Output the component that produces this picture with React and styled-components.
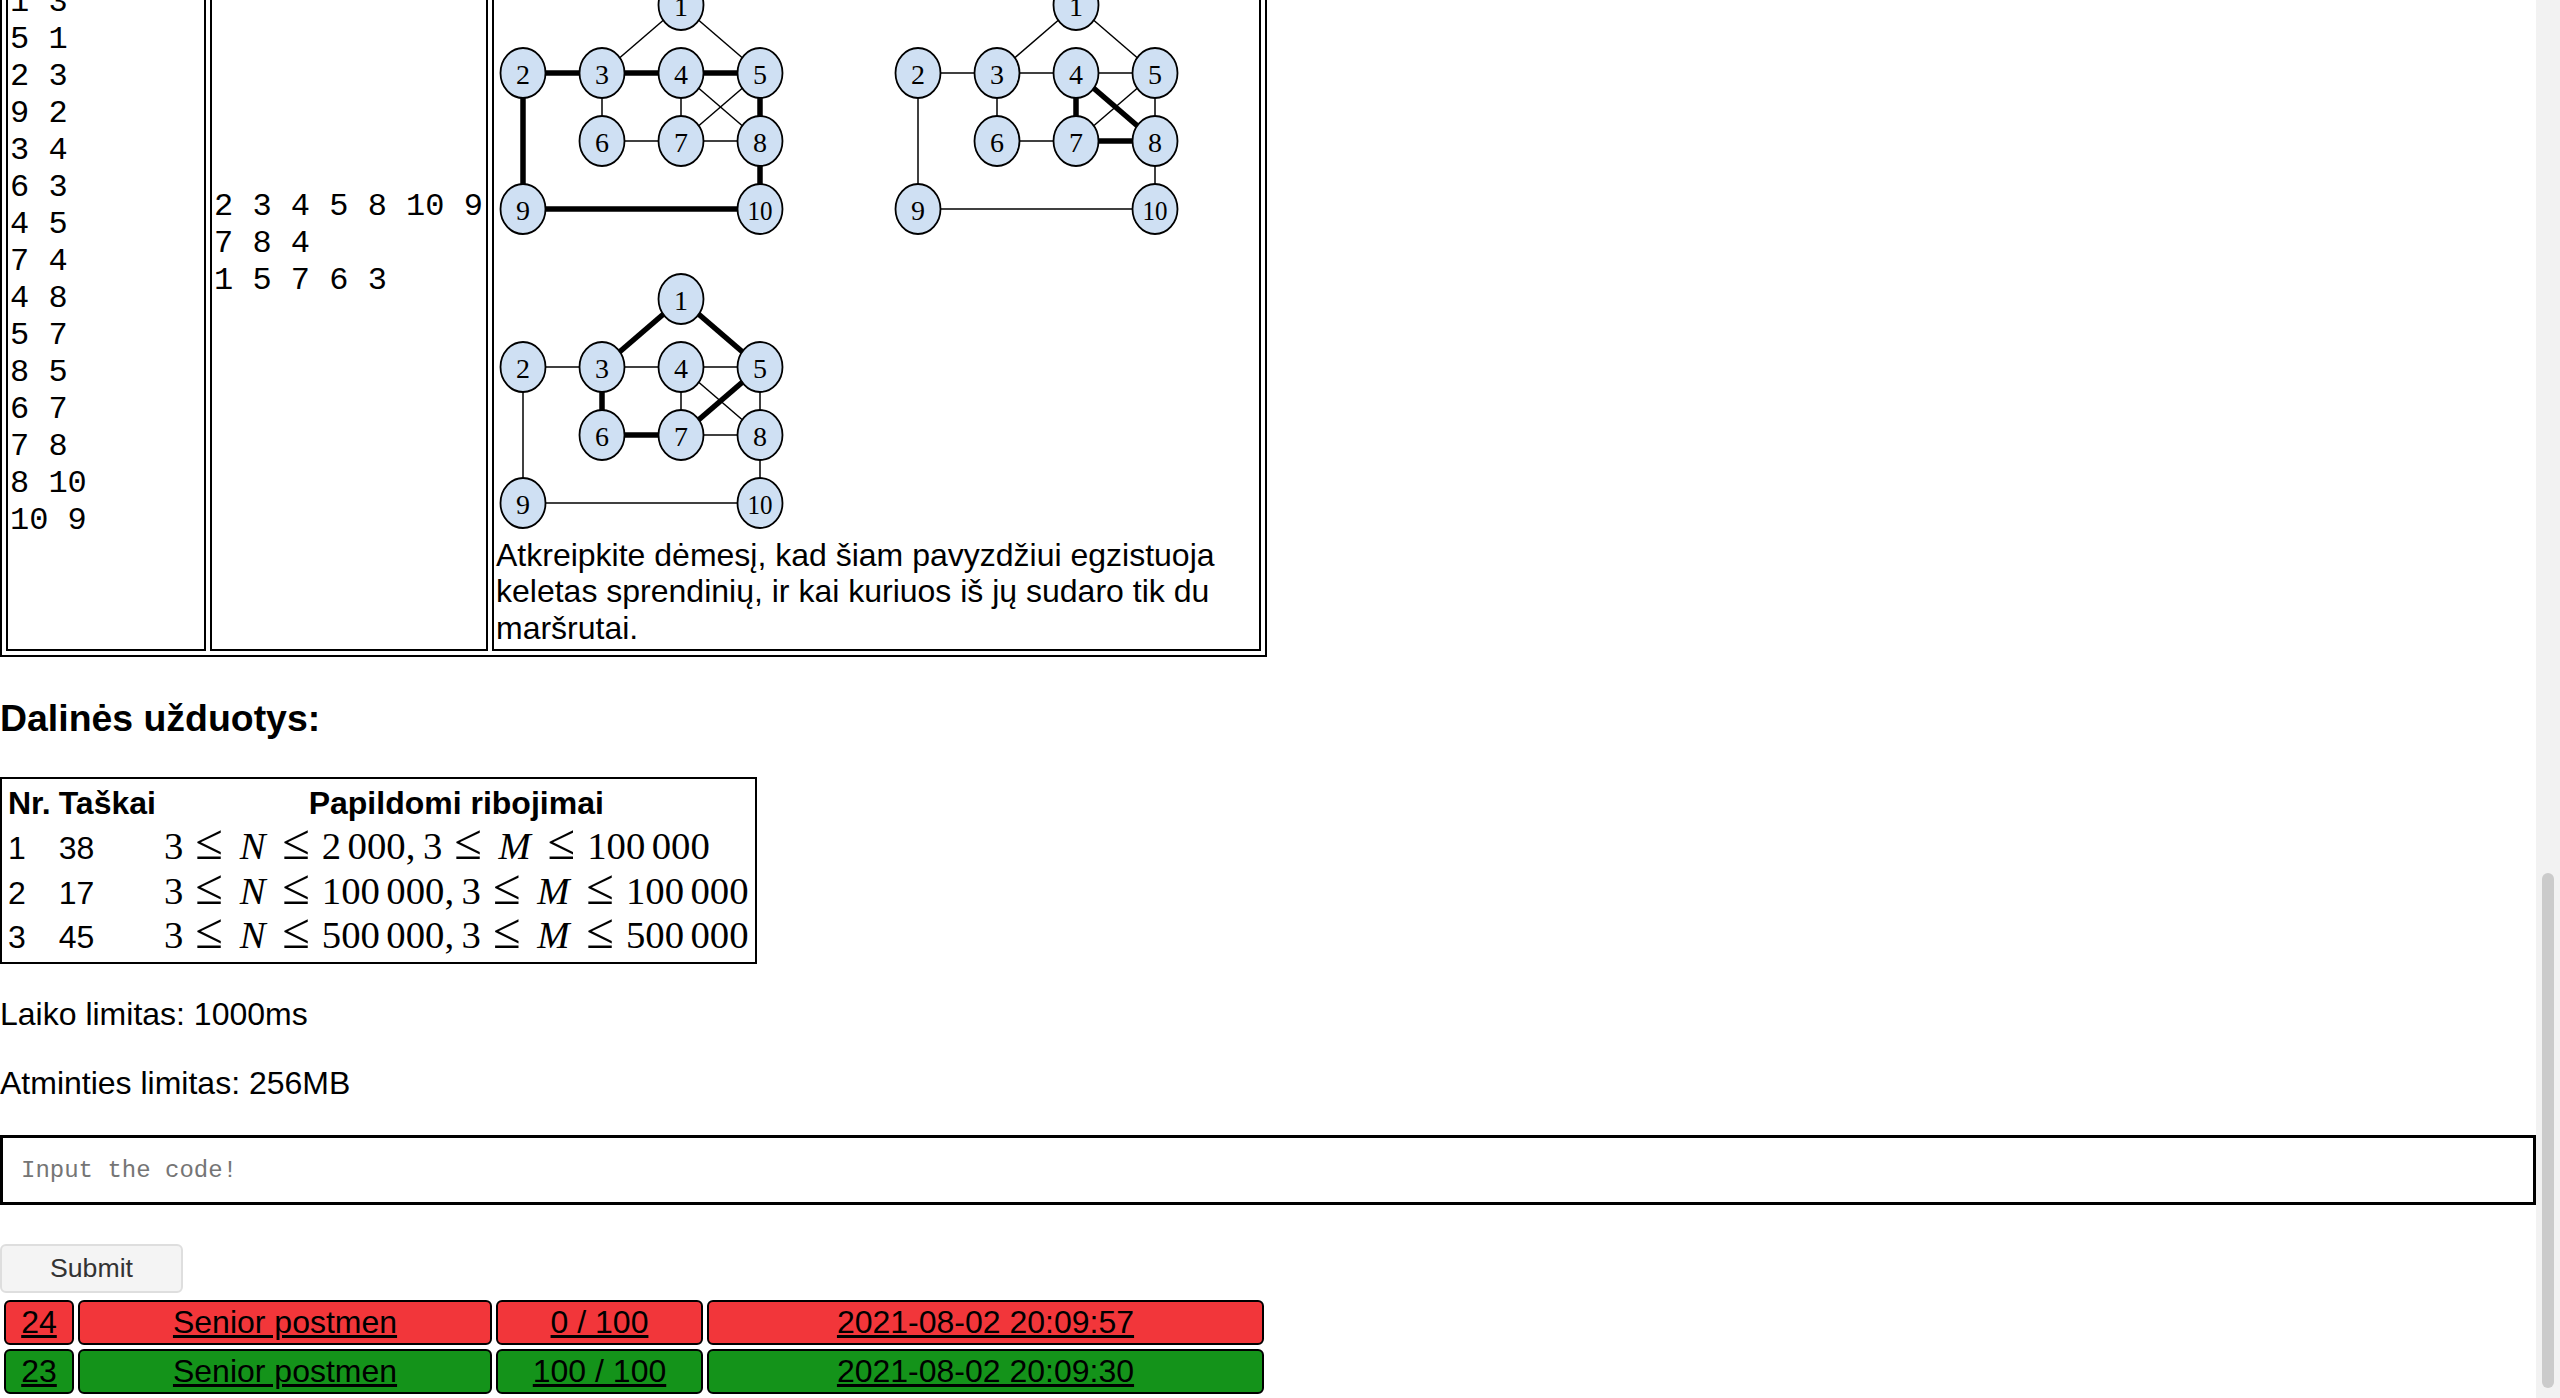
import React from "react";
import styled, { createGlobalStyle } from "styled-components";

const GlobalStyle = createGlobalStyle`
  html, body {
    margin: 0;
    padding: 0;
    height: 100%;
    overflow: hidden;
    background: #ffffff;
  }
  body {
    font-family: "Liberation Sans", Arial, sans-serif;
    font-size: 32px;
    line-height: 36.8px;
    color: #000;
  }
`;

const Frame = styled.div`
  display: flex;
  width: 100vw;
  height: 100vh;
`;

const Viewport = styled.main`
  flex: 1;
  min-width: 0;
  display: flex;
  flex-direction: column;
  justify-content: flex-end;
  overflow: hidden;
`;

const Page = styled.div`
  flex: none;
  display: flex;
  flex-direction: column;
  align-items: flex-start;
`;

const ScrollTrack = styled.div`
  width: 24px;
  flex: none;
  background: #f2f2f2;
  display: flex;
  flex-direction: column;
  justify-content: flex-end;
  align-items: center;
  padding-bottom: 10px;
  box-sizing: border-box;
`;

const ScrollThumb = styled.div`
  width: 12px;
  height: 515px;
  border-radius: 6px;
  background: #cbcbcb;
`;

/* ---------- sample table ---------- */

const SectionTitle = styled.h3`
  font-size: 37.44px;
  line-height: 43px;
  font-weight: bold;
  margin: ${(p) => p.$margin || "39.5px 0 37.5px"};
`;

const SampleTable = styled.table`
  border: 2px solid #000;
  border-spacing: 4px;
`;

const SampleHead = styled.th`
  border: 2px solid #000;
  padding: 2px;
  font-weight: bold;
  text-align: center;
`;

const SampleCell = styled.td`
  border: 2px solid #000;
  padding: 2px;
  vertical-align: middle;
  width: ${(p) => p.$w}px;
`;

const Mono = styled.pre`
  margin: 0;
  font-family: "Liberation Mono", "Courier New", monospace;
  font-size: 32px;
  line-height: 37px;
  white-space: pre;
`;

const Lead = styled.p`
  margin: 0;
`;

const Figures = styled.div`
  display: grid;
  grid-template-columns: 366px 366px;
  column-gap: 29px;
  row-gap: 7px;
  margin-bottom: 5.6px;
`;

const GraphSvg = styled.svg`
  display: block;
`;

const Note = styled.p`
  margin: 0;
`;

const NODES = {
  1: [185, 55],
  2: [27, 123],
  3: [106, 123],
  4: [185, 123],
  5: [264, 123],
  6: [106, 191],
  7: [185, 191],
  8: [264, 191],
  9: [27, 259],
  10: [264, 259],
};

const EDGES = [
  [1, 3], [1, 5], [2, 3], [2, 9], [3, 4], [3, 6], [4, 5], [4, 7],
  [4, 8], [5, 7], [5, 8], [6, 7], [7, 8], [8, 10], [9, 10],
];

function Graph({ route }) {
  const thick = new Set();
  route.forEach((a, i) => {
    const b = route[(i + 1) % route.length];
    thick.add(`${Math.min(a, b)}-${Math.max(a, b)}`);
  });
  return (
    <GraphSvg width="366" height="287" viewBox="0 0 366 287">
      {EDGES.map(([a, b]) => {
        const isThick = thick.has(`${Math.min(a, b)}-${Math.max(a, b)}`);
        return (
          <line
            key={`${a}-${b}`}
            x1={NODES[a][0]}
            y1={NODES[a][1]}
            x2={NODES[b][0]}
            y2={NODES[b][1]}
            stroke="#000"
            strokeWidth={isThick ? 5.5 : 1.5}
          />
        );
      })}
      {Object.entries(NODES).map(([id, [x, y]]) => (
        <g key={id}>
          <ellipse cx={x} cy={y} rx="22.5" ry="25" fill="#cfe0f3" stroke="#000" strokeWidth="1.8" />
          <text
            x={x}
            y={y + 1}
            textAnchor="middle"
            dominantBaseline="central"
            fontFamily="'Liberation Serif', 'Times New Roman', serif"
            fontSize="28"
            {...(id === "10" ? { textLength: 25, lengthAdjust: "spacingAndGlyphs" } : {})}
          >
            {id}
          </text>
        </g>
      ))}
    </GraphSvg>
  );
}

/* ---------- subtasks ---------- */

const SubtaskTable = styled.table`
  border: 2px solid #000;
  border-spacing: 4px;
`;

const SubtaskHead = styled.th`
  padding: 2px;
  font-weight: bold;
  text-align: center;
`;

const SubtaskCell = styled.td`
  padding: 2px;
  height: 36.8px;
  text-align: left;
  white-space: nowrap;
`;

const MathText = styled.span`
  font-family: "Liberation Serif", "Times New Roman", serif;
  font-size: 38.72px;
  line-height: 0;
  white-space: nowrap;
`;

const Rel = styled.span`
  display: inline-block;
  font-size: 1.3em;
  line-height: 0;
  width: 0.598em;
  margin: 0 0.2137em;
  text-align: center;
`;

const Var = styled.span`
  display: inline-block;
  font-style: italic;
  line-height: 0;
  text-align: center;
  width: ${(p) => p.$w}em;
`;

const Thin = styled.span`
  display: inline-block;
  width: 0.1667em;
`;

const Punct = styled.span`
  display: inline-block;
  line-height: 0;
  width: 0.2778em;
  margin-right: 0.1667em;
`;

function Num({ value }) {
  const parts = value.split(" ");
  return (
    <>
      {parts.map((p, i) => (
        <React.Fragment key={i}>
          {i > 0 && <Thin />}
          {p}
        </React.Fragment>
      ))}
    </>
  );
}

function Constraint({ n, m }) {
  return (
    <MathText>
      3<Rel>≤</Rel>
      <Var $w={0.912}>N</Var>
      <Rel>≤</Rel>
      <Num value={n} />
      <Punct>,</Punct>3<Rel>≤</Rel>
      <Var $w={1.079}>M</Var>
      <Rel>≤</Rel>
      <Num value={m} />
    </MathText>
  );
}

const Info = styled.p`
  margin: 32px 0 0;
`;

/* ---------- submit form ---------- */

const CodeInput = styled.input`
  display: block;
  box-sizing: border-box;
  width: 100%;
  height: 70px;
  margin: 33.6px 0 0;
  padding: 0 18px;
  border: 3px solid #000;
  border-radius: 0;
  background: #fff;
  font-family: "Liberation Mono", "Courier New", monospace;
  font-size: 24px;
  outline: none;
  &::placeholder {
    color: #757575;
  }
`;

const SubmitButton = styled.button`
  display: block;
  box-sizing: border-box;
  height: 49px;
  margin: 39px 0 0;
  padding: 0 48px;
  background: #f4f4f4;
  border: 2px solid #dedede;
  border-radius: 6px;
  color: #333;
  font-family: "Liberation Sans", Arial, sans-serif;
  font-size: 26.67px;
`;

const SubmissionTable = styled.table`
  width: 1268px;
  border-spacing: 4px;
  margin-top: 3px;
`;

const SubmissionCell = styled.td`
  width: ${(p) => p.$w}px;
  padding: 2px;
  border: 2px solid #000;
  border-radius: 6px;
  text-align: center;
  white-space: nowrap;
  background: ${(p) => (p.$ok ? "#14931a" : "#f2363a")};
`;

const SubmissionLink = styled.a`
  color: #000;
  text-decoration: underline;
`;

const submissions = [
  { id: 24, task: "Senior postmen", score: "0 / 100", time: "2021-08-02 20:09:57", ok: false },
  { id: 23, task: "Senior postmen", score: "100 / 100", time: "2021-08-02 20:09:30", ok: true },
];

const inputLines = [
  "10 15", "1 3", "5 1", "2 3", "9 2", "3 4", "6 3", "4 5", "7 4",
  "4 8", "5 7", "8 5", "6 7", "7 8", "8 10", "10 9",
].join("\n");

const outputLines = ["2 3 4 5 8 10 9", "7 8 4", "1 5 7 6 3"].join("\n");

export default function App() {
  return (
    <>
      <GlobalStyle />
      <Frame>
        <Viewport>
          <Page>
            <SectionTitle $margin="0 0 37.5px">Pavyzdys:</SectionTitle>
            <SampleTable>
              <tbody>
                <tr>
                  <SampleHead>Pradiniai duomenys</SampleHead>
                  <SampleHead>Rezultatai</SampleHead>
                  <SampleHead>Paaiškinimas</SampleHead>
                </tr>
                <tr>
                  <SampleCell $w={192}>
                    <Mono>{inputLines}</Mono>
                  </SampleCell>
                  <SampleCell $w={270}>
                    <Mono>{outputLines}</Mono>
                  </SampleCell>
                  <SampleCell $w={761}>
                    <Lead>
                      Paveikslėliuose pavaizduotas miestas
                      <br />
                      ir galimi laiškanešių maršrutai
                      <br />
                      (paryškintos maršrutų gatvės).
                    </Lead>
                    <Figures>
                      <Graph route={[2, 3, 4, 5, 8, 10, 9]} />
                      <Graph route={[7, 8, 4]} />
                      <Graph route={[1, 5, 7, 6, 3]} />
                    </Figures>
                    <Note>
                      Atkreipkite dėmesį, kad šiam pavyzdžiui egzistuoja keletas sprendinių, ir kai
                      kuriuos iš jų sudaro tik du maršrutai.
                    </Note>
                  </SampleCell>
                </tr>
              </tbody>
            </SampleTable>

            <SectionTitle>Dalinės užduotys:</SectionTitle>

            <SubtaskTable>
              <tbody>
                <tr>
                  <SubtaskHead>Nr.</SubtaskHead>
                  <SubtaskHead>Taškai</SubtaskHead>
                  <SubtaskHead>Papildomi ribojimai</SubtaskHead>
                </tr>
                <tr>
                  <SubtaskCell>1</SubtaskCell>
                  <SubtaskCell>38</SubtaskCell>
                  <SubtaskCell>
                    <Constraint n="2 000" m="100 000" />
                  </SubtaskCell>
                </tr>
                <tr>
                  <SubtaskCell>2</SubtaskCell>
                  <SubtaskCell>17</SubtaskCell>
                  <SubtaskCell>
                    <Constraint n="100 000" m="100 000" />
                  </SubtaskCell>
                </tr>
                <tr>
                  <SubtaskCell>3</SubtaskCell>
                  <SubtaskCell>45</SubtaskCell>
                  <SubtaskCell>
                    <Constraint n="500 000" m="500 000" />
                  </SubtaskCell>
                </tr>
              </tbody>
            </SubtaskTable>

            <Info>Laiko limitas: 1000ms</Info>
            <Info>Atminties limitas: 256MB</Info>

            <CodeInput type="text" placeholder="Input the code!" />
            <SubmitButton type="button">Submit</SubmitButton>

            <SubmissionTable>
              <tbody>
                {submissions.map((s) => (
                  <tr key={s.id}>
                    <SubmissionCell $ok={s.ok} $w={62}>
                      <SubmissionLink href="#">{s.id}</SubmissionLink>
                    </SubmissionCell>
                    <SubmissionCell $ok={s.ok} $w={406}>
                      <SubmissionLink href="#">{s.task}</SubmissionLink>
                    </SubmissionCell>
                    <SubmissionCell $ok={s.ok} $w={199}>
                      <SubmissionLink href="#">{s.score}</SubmissionLink>
                    </SubmissionCell>
                    <SubmissionCell $ok={s.ok} $w={549}>
                      <SubmissionLink href="#">{s.time}</SubmissionLink>
                    </SubmissionCell>
                  </tr>
                ))}
              </tbody>
            </SubmissionTable>
          </Page>
        </Viewport>
        <ScrollTrack>
          <ScrollThumb />
        </ScrollTrack>
      </Frame>
    </>
  );
}
